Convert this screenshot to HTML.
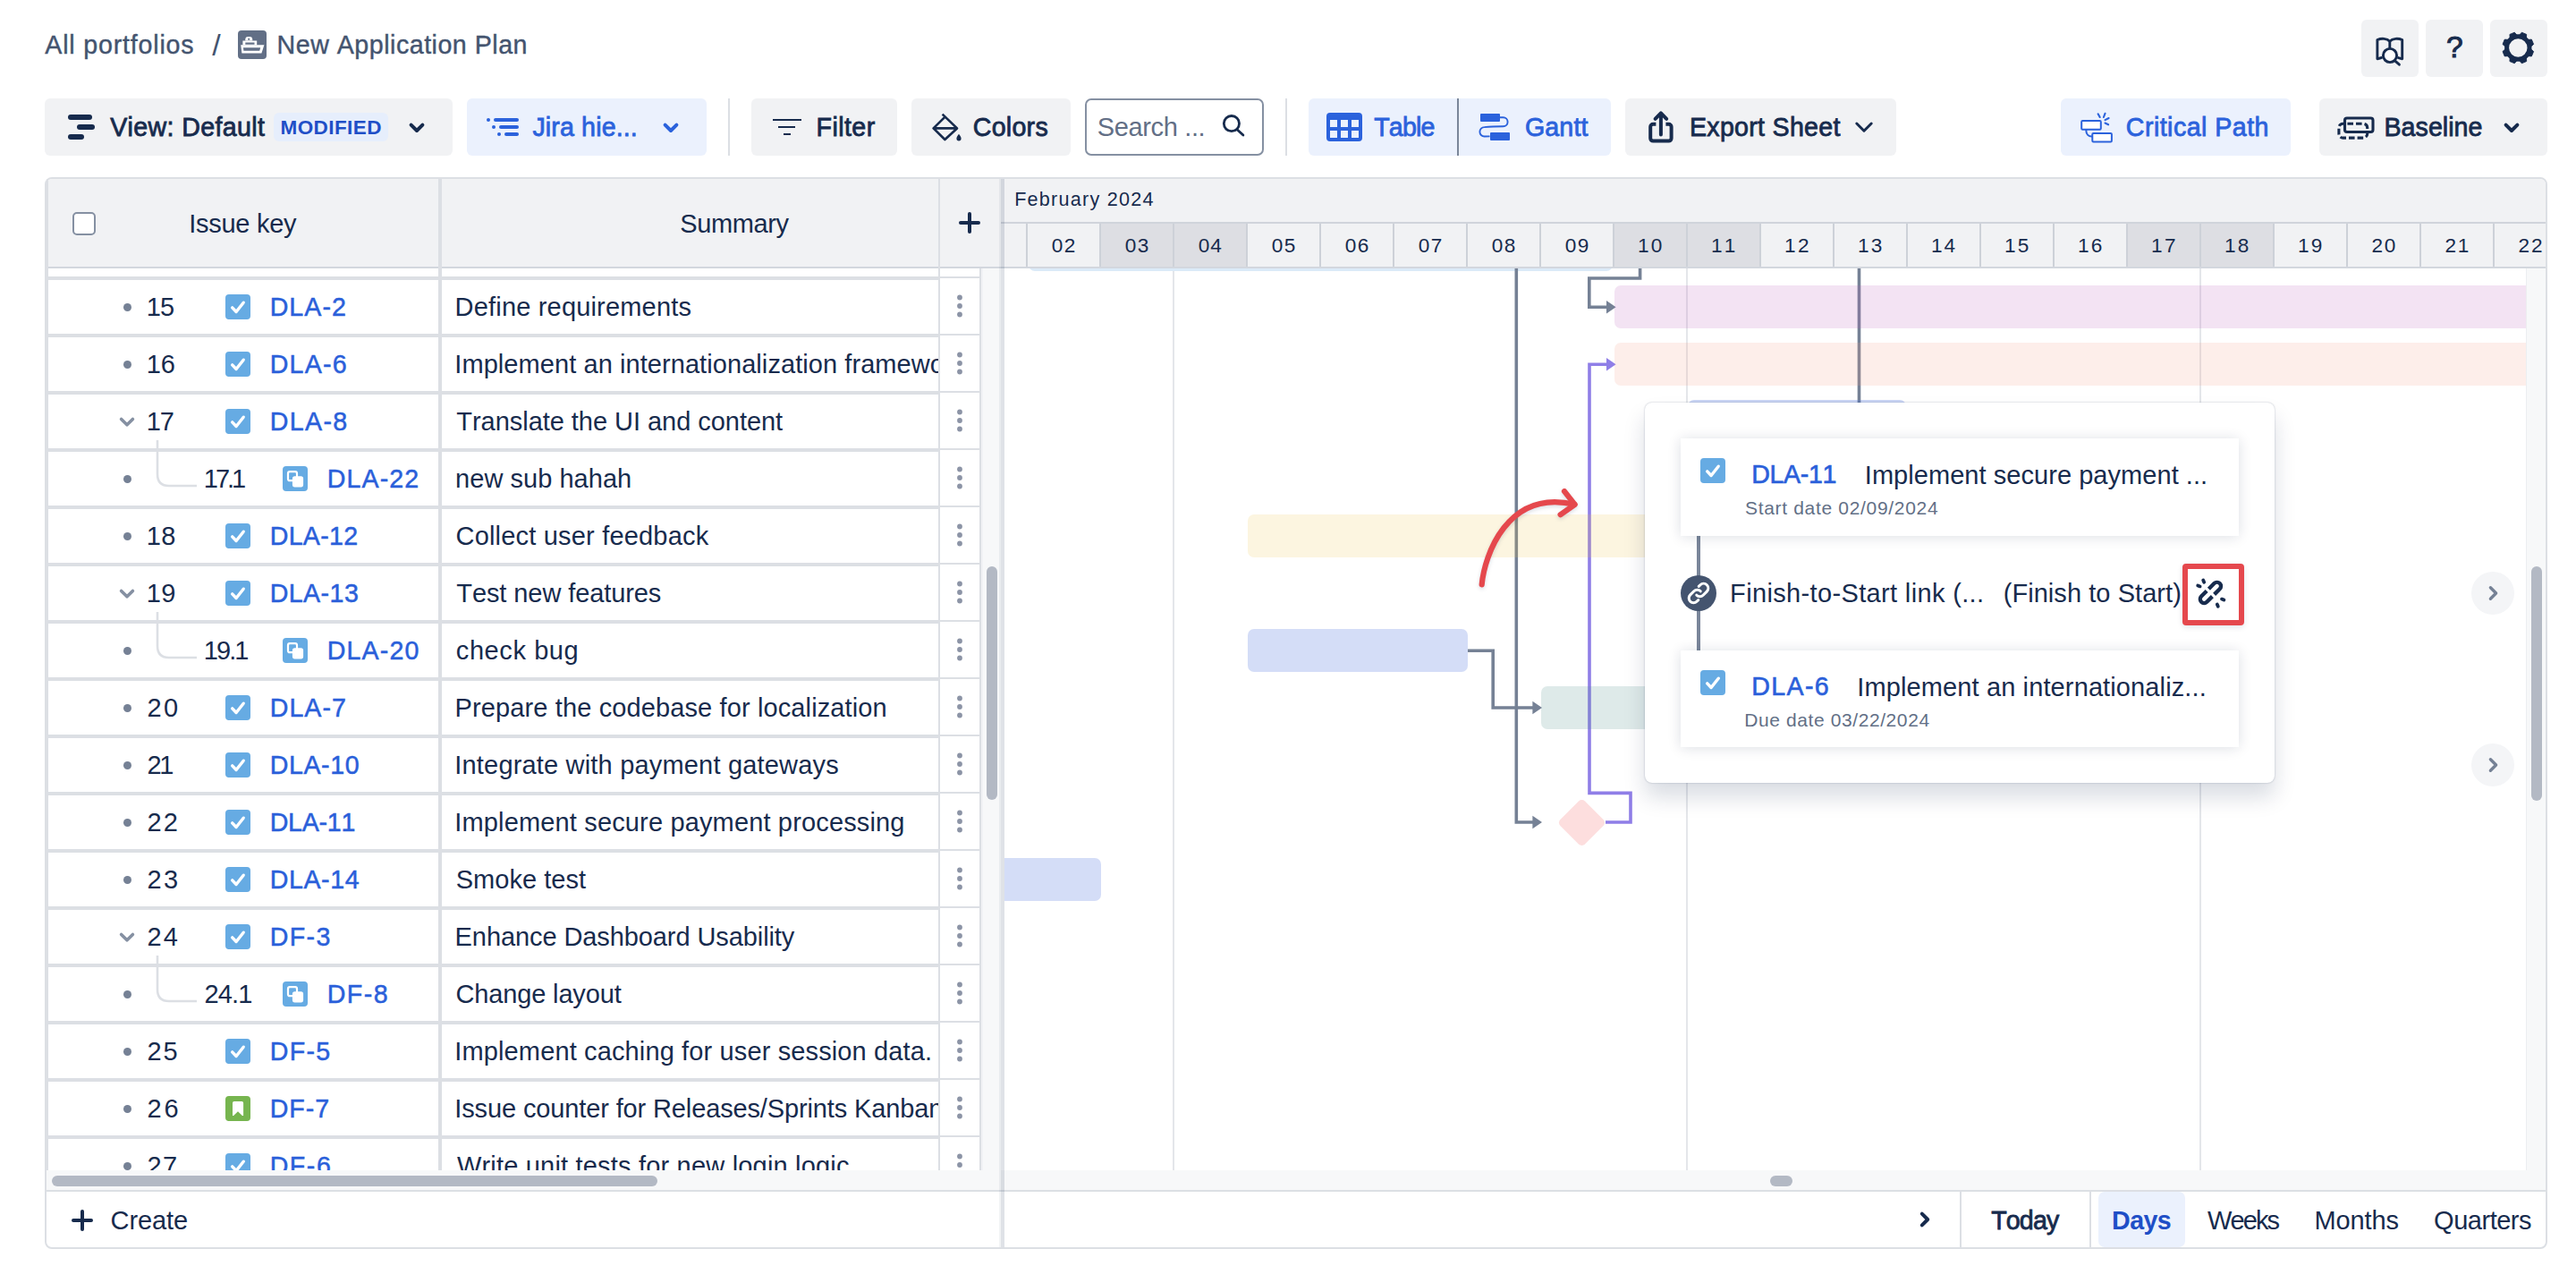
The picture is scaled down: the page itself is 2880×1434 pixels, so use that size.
<!DOCTYPE html>
<html lang="en">
<head>
<meta charset="utf-8">
<title>New Application Plan</title>
<style>
html,body{margin:0;padding:0;}
body{width:2880px;height:1434px;overflow:hidden;background:#fff;position:relative;font-family:"Liberation Sans",sans-serif;color:#172b4d;}
.a{position:absolute;box-sizing:border-box;}
.t{position:absolute;white-space:nowrap;margin:0;font-weight:400;font-kerning:none;}
svg{position:absolute;overflow:visible;}
.clip{overflow:hidden;}
@media (max-width:1500px){body{zoom:0.5;}}
</style>
</head>
<body>

<nav>
<div class="t" style="left:50.3px;top:30.0px;font-size:28.6px;line-height:40px;color:#44546f;letter-spacing:0.81px;-webkit-text-stroke:0.4px #44546f;">All portfolios</div>
<div class="t" style="left:237.2px;top:27.1px;font-size:34px;line-height:47px;color:#44546f;">/</div>
<div class="a" style="left:266px;top:34px;width:32px;height:32px;background:#626f86;border-radius:4px;"></div>
<svg style="left:266px;top:34px" width="32" height="32" viewBox="0 0 32 32" ><path d="M3.2 16.2h26.2l-3 9.4H4.4z" fill="#fff"/><path d="M6 19.3h19.2l-1 3.4H6.4z" fill="#626f86"/>
<path d="M5.4 16.5v-5h15.8v5z" fill="#fff"/><rect x="8.3" y="13.5" width="10.2" height="2.2" fill="#626f86"/>
<path d="M8.3 11.6v-1.4a3.1 3.1 0 0 1 3.1-3.1h1.7a3.1 3.1 0 0 1 3.1 3.1v1.4z" fill="#fff"/><circle cx="12.2" cy="9.8" r="1.1" fill="#626f86"/></svg>
<div class="t" style="left:309.6px;top:30.0px;font-size:28.6px;line-height:40px;color:#44546f;letter-spacing:0.51px;-webkit-text-stroke:0.4px #44546f;">New Application Plan</div>
</nav>
<div class="a" style="left:2640px;top:22px;width:64px;height:64px;background:#f1f2f4;border-radius:6px;"></div>
<div class="a" style="left:2712px;top:22px;width:64px;height:64px;background:#f1f2f4;border-radius:6px;"></div>
<div class="a" style="left:2784px;top:22px;width:64px;height:64px;background:#f1f2f4;border-radius:6px;"></div>
<svg style="left:2640px;top:22px" width="64" height="64" viewBox="0 0 64 64" ><path d="M31.8 24.2c-3-3.4-9.5-3.6-13.9-1.6v21.2l4.6-1.3M31.8 24.2v8M31.8 24.2c3-3.4 9.5-3.6 13.9-1.6v21.2l-4.2-1.2" fill="none" stroke="#172b4d" stroke-width="2.9" stroke-linejoin="round" stroke-linecap="round"/>
<circle cx="32" cy="40" r="7.6" fill="#fff" stroke="#172b4d" stroke-width="2.9"/><path d="M37.8 46.2l4.6 4" stroke="#172b4d" stroke-width="2.9" stroke-linecap="round"/></svg>
<div class="t" style="left:2735.1px;top:29.8px;font-size:33.5px;line-height:46px;color:#172b4d;-webkit-text-stroke:1.0px #172b4d;">?</div>
<svg style="left:2784px;top:22px" width="64" height="64" viewBox="0 0 64 64" ><g transform="translate(31.3 31.5)"><circle r="12.7" fill="none" stroke="#172b4d" stroke-width="5"/><path transform="rotate(22.5)" d="M-4.3 -13.5L-2.9 -17.5H2.9L4.3 -13.5z" fill="#172b4d" stroke="#172b4d" stroke-width="0.8" stroke-linejoin="round"/><path transform="rotate(67.5)" d="M-4.3 -13.5L-2.9 -17.5H2.9L4.3 -13.5z" fill="#172b4d" stroke="#172b4d" stroke-width="0.8" stroke-linejoin="round"/><path transform="rotate(112.5)" d="M-4.3 -13.5L-2.9 -17.5H2.9L4.3 -13.5z" fill="#172b4d" stroke="#172b4d" stroke-width="0.8" stroke-linejoin="round"/><path transform="rotate(157.5)" d="M-4.3 -13.5L-2.9 -17.5H2.9L4.3 -13.5z" fill="#172b4d" stroke="#172b4d" stroke-width="0.8" stroke-linejoin="round"/><path transform="rotate(202.5)" d="M-4.3 -13.5L-2.9 -17.5H2.9L4.3 -13.5z" fill="#172b4d" stroke="#172b4d" stroke-width="0.8" stroke-linejoin="round"/><path transform="rotate(247.5)" d="M-4.3 -13.5L-2.9 -17.5H2.9L4.3 -13.5z" fill="#172b4d" stroke="#172b4d" stroke-width="0.8" stroke-linejoin="round"/><path transform="rotate(292.5)" d="M-4.3 -13.5L-2.9 -17.5H2.9L4.3 -13.5z" fill="#172b4d" stroke="#172b4d" stroke-width="0.8" stroke-linejoin="round"/><path transform="rotate(337.5)" d="M-4.3 -13.5L-2.9 -17.5H2.9L4.3 -13.5z" fill="#172b4d" stroke="#172b4d" stroke-width="0.8" stroke-linejoin="round"/></g></svg>
<section>
<div class="a" style="left:50px;top:110px;width:456px;height:64px;background:#f1f2f4;border-radius:6px;"></div>
<div class="a" style="left:76px;top:128px;width:26.5px;height:5.6px;background:#172b4d;border-radius:3px;"></div>
<div class="a" style="left:86px;top:139px;width:20px;height:5.6px;background:#172b4d;border-radius:3px;"></div>
<div class="a" style="left:76px;top:150px;width:18px;height:5.6px;background:#172b4d;border-radius:3px;"></div>
<div class="t" style="left:123.2px;top:122.0px;font-size:28.6px;line-height:40px;color:#172b4d;letter-spacing:0.35px;-webkit-text-stroke:0.8px #172b4d;">View: Default</div>
<div class="a" style="left:306px;top:126px;width:128px;height:32px;background:#e6eefc;border-radius:6px;"></div>
<div class="t" style="left:313.5px;top:126.5px;font-size:22.5px;line-height:31px;color:#1f4fc7;font-weight:700;letter-spacing:0.42px;">MODIFIED</div>
<svg style="left:456px;top:135px" width="20" height="16" viewBox="0 0 20 16" fill="none" stroke="#172b4d" stroke-width="4" stroke-linecap="round" stroke-linejoin="round"><path d="M3.6 4.6l6.4 6.4 6.4-6.4"/></svg>
<div class="a" style="left:522px;top:110px;width:268px;height:64px;background:#ebf1fd;border-radius:6px;"></div>
<div class="a" style="left:544px;top:132px;width:4px;height:4px;background:#2b62dc;border-radius:2px;"></div>
<div class="a" style="left:552px;top:132px;width:28px;height:4px;background:#2b62dc;border-radius:2px;"></div>
<div class="a" style="left:550px;top:140px;width:4px;height:4px;background:#2b62dc;border-radius:2px;"></div>
<div class="a" style="left:558px;top:140px;width:22px;height:4px;background:#2b62dc;border-radius:2px;"></div>
<div class="a" style="left:556px;top:148px;width:4px;height:4px;background:#2b62dc;border-radius:2px;"></div>
<div class="a" style="left:564px;top:148px;width:16px;height:4px;background:#2b62dc;border-radius:2px;"></div>
<div class="t" style="left:595.4px;top:122.0px;font-size:28.6px;line-height:40px;color:#2b62dc;letter-spacing:0.14px;-webkit-text-stroke:0.8px #2b62dc;">Jira hie...</div>
<svg style="left:740px;top:135px" width="20" height="16" viewBox="0 0 20 16" fill="none" stroke="#2b62dc" stroke-width="4" stroke-linecap="round" stroke-linejoin="round"><path d="M3.6 4.6l6.4 6.4 6.4-6.4"/></svg>
<div class="a" style="left:814px;top:110px;width:2px;height:64px;background:#dcdfe4;"></div>
<div class="a" style="left:840px;top:110px;width:163px;height:64px;background:#f1f2f4;border-radius:6px;"></div>
<div class="a" style="left:864px;top:132.7px;width:31.6px;height:2.5px;background:#172b4d;"></div>
<div class="a" style="left:870.4px;top:140.8px;width:19px;height:2.5px;background:#172b4d;"></div>
<div class="a" style="left:876.2px;top:148.9px;width:7.4px;height:2.5px;background:#172b4d;"></div>
<div class="t" style="left:912.5px;top:122.0px;font-size:28.6px;line-height:40px;color:#172b4d;letter-spacing:0.43px;-webkit-text-stroke:0.8px #172b4d;">Filter</div>
<div class="a" style="left:1019px;top:110px;width:178px;height:64px;background:#f1f2f4;border-radius:6px;"></div>
<svg style="left:1040px;top:124px" width="36" height="36" viewBox="0 0 36 36" ><path d="M13.6 3.6L30 19.4 16.4 32 3.6 19.4 15.8 7.4M3.6 19.4H30" fill="none" stroke="#172b4d" stroke-width="2.7" stroke-linejoin="round" stroke-linecap="butt"/>
<path d="M32 25.8c1.6 2.2 2.6 3.6 2.6 5a2.6 2.6 0 0 1-5.2 0c0-1.4 1-2.8 2.6-5z" fill="#172b4d"/></svg>
<div class="t" style="left:1087.8px;top:122.0px;font-size:28.6px;line-height:40px;color:#172b4d;letter-spacing:0.25px;-webkit-text-stroke:0.8px #172b4d;">Colors</div>
<div class="a" style="left:1213px;top:110px;width:200px;height:64px;background:#fff;border-radius:7px;border:2.4px solid #8590a2;"></div>
<div class="t" style="left:1226.7px;top:122.0px;font-size:29px;line-height:40px;color:#626f86;letter-spacing:-0.35px;">Search ...</div>
<svg style="left:1364px;top:126px" width="28" height="28" viewBox="0 0 28 28" ><circle cx="12.9" cy="12.1" r="8.6" fill="none" stroke="#172b4d" stroke-width="2.8"/><path d="M19.3 18.9l6.6 6.2" stroke="#172b4d" stroke-width="2.8" stroke-linecap="round"/></svg>
<div class="a" style="left:1437px;top:110px;width:2px;height:64px;background:#dcdfe4;"></div>
<div class="a" style="left:1463px;top:110px;width:338px;height:64px;background:#ebf1fd;border-radius:6px;"></div>
<div class="a" style="left:1483px;top:126px;width:40px;height:32px;background:#2b62dc;border-radius:4px;"></div>
<div class="a" style="left:1487.2px;top:134.2px;width:7.9px;height:7.6px;background:#ebf1fd;"></div>
<div class="a" style="left:1487.2px;top:146.2px;width:7.9px;height:7.6px;background:#ebf1fd;"></div>
<div class="a" style="left:1499.1px;top:134.2px;width:7.9px;height:7.6px;background:#ebf1fd;"></div>
<div class="a" style="left:1499.1px;top:146.2px;width:7.9px;height:7.6px;background:#ebf1fd;"></div>
<div class="a" style="left:1511px;top:134.2px;width:7.9px;height:7.6px;background:#ebf1fd;"></div>
<div class="a" style="left:1511px;top:146.2px;width:7.9px;height:7.6px;background:#ebf1fd;"></div>
<div class="t" style="left:1536.2px;top:122.0px;font-size:28.6px;line-height:40px;color:#2b62dc;letter-spacing:-0.81px;-webkit-text-stroke:0.8px #2b62dc;">Table</div>
<div class="a" style="left:1629px;top:110px;width:2px;height:64px;background:#7a8699;"></div>
<div class="a" style="left:1655px;top:126.8px;width:22px;height:9px;background:#2b62dc;border-radius:1px;"></div>
<div class="a" style="left:1665.7px;top:148.3px;width:22px;height:9px;background:#2b62dc;border-radius:1px;"></div>
<svg style="left:1650px;top:124px" width="40" height="36" viewBox="0 0 40 36" ><path d="M27 7.3h3.6a5 5 0 0 1 0 10c-6 0-14.4 .2-21 .8a5.2 5.2 0 0 0 0 10.4c2 0 4 0 6-.1" fill="none" stroke="#2b62dc" stroke-width="1.9"/></svg>
<div class="t" style="left:1704.9px;top:122.0px;font-size:28.6px;line-height:40px;color:#2b62dc;letter-spacing:0.15px;-webkit-text-stroke:0.8px #2b62dc;">Gantt</div>
<div class="a" style="left:1817px;top:110px;width:303px;height:64px;background:#f1f2f4;border-radius:6px;"></div>
<svg style="left:1840px;top:122px" width="34" height="40" viewBox="0 0 34 40" ><path d="M11.4 16.7H8.2a3 3 0 0 0-3 3v12.9a3 3 0 0 0 3 3h17.4a3 3 0 0 0 3-3V19.7a3 3 0 0 0-3-3h-3.2" fill="none" stroke="#172b4d" stroke-width="4" stroke-linejoin="round"/>
<path d="M16.9 28.6V6M10.6 10.8l6.3-6.4 6.3 6.4" fill="none" stroke="#172b4d" stroke-width="4" stroke-linecap="round" stroke-linejoin="round"/></svg>
<div class="t" style="left:1889.0px;top:122.0px;font-size:28.6px;line-height:40px;color:#172b4d;letter-spacing:0.28px;-webkit-text-stroke:0.8px #172b4d;">Export Sheet</div>
<svg style="left:2072px;top:134px" width="24" height="16" viewBox="0 0 24 16" fill="none" stroke="#172b4d" stroke-width="3" stroke-linecap="round" stroke-linejoin="round"><path d="M3.8 4l8.2 8.2L20.2 4"/></svg>
<div class="a" style="left:2304px;top:110px;width:257px;height:64px;background:#ebf1fd;border-radius:6px;"></div>
<svg style="left:2324px;top:124px" width="40" height="38" viewBox="0 0 40 38" ><path d="M8.4 20.6v2a6 6 0 0 0 6 6h1" fill="none" stroke="#2b62dc" stroke-width="2"/>
<rect x="3.2" y="11.1" width="21.6" height="9.6" rx="1.2" fill="#fff" stroke="#2b62dc" stroke-width="2"/>
<rect x="15.3" y="24.9" width="21.6" height="9.6" rx="1.2" fill="#fff" stroke="#2b62dc" stroke-width="2"/>
<path d="M21.6 3.3l2.1 3.7M29.5 2.8l-1.6 4.2M33.6 8l-4.1 2.1M29.5 13.5l3.6 1.8" stroke="#2b62dc" stroke-width="2.1" stroke-linecap="round"/></svg>
<div class="t" style="left:2376.8px;top:122.0px;font-size:28.6px;line-height:40px;color:#2b62dc;letter-spacing:0.46px;-webkit-text-stroke:0.8px #2b62dc;">Critical Path</div>
<div class="a" style="left:2593px;top:110px;width:255px;height:64px;background:#f1f2f4;border-radius:6px;"></div>
<svg style="left:2610px;top:126px" width="48" height="34" viewBox="0 0 48 34" ><rect x="4.9" y="12.3" width="31.8" height="15.8" rx="4.5" fill="none" stroke="#172b4d" stroke-width="3.1" stroke-dasharray="6.6 3" stroke-dashoffset="-5"/>
<rect x="11.5" y="6" width="31.5" height="15.5" rx="2.5" fill="none" stroke="#172b4d" stroke-width="3.1"/></svg>
<div class="t" style="left:2665.5px;top:122.0px;font-size:28.6px;line-height:40px;color:#172b4d;letter-spacing:0.04px;-webkit-text-stroke:0.8px #172b4d;">Baseline</div>
<svg style="left:2798px;top:135px" width="20" height="16" viewBox="0 0 20 16" fill="none" stroke="#172b4d" stroke-width="4" stroke-linecap="round" stroke-linejoin="round"><path d="M3.6 4.6l6.4 6.4 6.4-6.4"/></svg>
</section>
<main>
<div class="a" style="left:50px;top:198px;width:2798px;height:1198px;background:#fff;border-radius:8px;border:2px solid #dcdfe4;"></div>
<div class="a" style="left:52px;top:200px;width:2794px;height:98px;background:#f1f2f4;border-radius:6px 6px 0 0;"></div>
<div class="a" style="left:52px;top:298px;width:2794px;height:2px;background:#d3d7de;"></div>
<div class="a" style="left:52px;top:200px;width:2px;height:1108px;background:#dcdfe4;"></div>
<div class="a" style="left:81px;top:237px;width:26px;height:26px;background:#fff;border-radius:5px;border:2px solid #8590a2;"></div>
<h2 class="t" style="left:211.3px;top:230.0px;font-size:29px;line-height:40px;color:#172b4d;letter-spacing:-0.28px;">Issue key</h2>
<h2 class="t" style="left:760.2px;top:230.0px;font-size:29px;line-height:40px;color:#172b4d;letter-spacing:-0.37px;">Summary</h2>
<div class="a" style="left:490px;top:200px;width:4px;height:1108px;background:#dcdfe4;"></div>
<div class="a" style="left:1049px;top:200px;width:2px;height:1108px;background:#dcdfe4;"></div>
<div class="a" style="left:1072px;top:247.2px;width:24px;height:3.6px;background:#172b4d;border-radius:2px;"></div>
<div class="a" style="left:1082.2px;top:237px;width:3.6px;height:24px;background:#172b4d;border-radius:2px;"></div>
<div class="a clip" style="left:52px;top:300px;width:1068px;height:1008px;">
<div class="a" style="left:0px;top:9px;width:997px;height:4px;background:#dcdfe4;"></div>
<div class="a" style="left:997px;top:9px;width:46px;height:2px;background:#dcdfe4;"></div>
<div class="a" style="left:0px;top:73px;width:997px;height:4px;background:#dcdfe4;"></div>
<div class="a" style="left:997px;top:73px;width:46px;height:2px;background:#dcdfe4;"></div>
<div class="a" style="left:0px;top:137px;width:997px;height:4px;background:#dcdfe4;"></div>
<div class="a" style="left:997px;top:137px;width:46px;height:2px;background:#dcdfe4;"></div>
<div class="a" style="left:0px;top:201px;width:997px;height:4px;background:#dcdfe4;"></div>
<div class="a" style="left:997px;top:201px;width:46px;height:2px;background:#dcdfe4;"></div>
<div class="a" style="left:0px;top:265px;width:997px;height:4px;background:#dcdfe4;"></div>
<div class="a" style="left:997px;top:265px;width:46px;height:2px;background:#dcdfe4;"></div>
<div class="a" style="left:0px;top:329px;width:997px;height:4px;background:#dcdfe4;"></div>
<div class="a" style="left:997px;top:329px;width:46px;height:2px;background:#dcdfe4;"></div>
<div class="a" style="left:0px;top:393px;width:997px;height:4px;background:#dcdfe4;"></div>
<div class="a" style="left:997px;top:393px;width:46px;height:2px;background:#dcdfe4;"></div>
<div class="a" style="left:0px;top:457px;width:997px;height:4px;background:#dcdfe4;"></div>
<div class="a" style="left:997px;top:457px;width:46px;height:2px;background:#dcdfe4;"></div>
<div class="a" style="left:0px;top:521px;width:997px;height:4px;background:#dcdfe4;"></div>
<div class="a" style="left:997px;top:521px;width:46px;height:2px;background:#dcdfe4;"></div>
<div class="a" style="left:0px;top:585px;width:997px;height:4px;background:#dcdfe4;"></div>
<div class="a" style="left:997px;top:585px;width:46px;height:2px;background:#dcdfe4;"></div>
<div class="a" style="left:0px;top:649px;width:997px;height:4px;background:#dcdfe4;"></div>
<div class="a" style="left:997px;top:649px;width:46px;height:2px;background:#dcdfe4;"></div>
<div class="a" style="left:0px;top:713px;width:997px;height:4px;background:#dcdfe4;"></div>
<div class="a" style="left:997px;top:713px;width:46px;height:2px;background:#dcdfe4;"></div>
<div class="a" style="left:0px;top:777px;width:997px;height:4px;background:#dcdfe4;"></div>
<div class="a" style="left:997px;top:777px;width:46px;height:2px;background:#dcdfe4;"></div>
<div class="a" style="left:0px;top:841px;width:997px;height:4px;background:#dcdfe4;"></div>
<div class="a" style="left:997px;top:841px;width:46px;height:2px;background:#dcdfe4;"></div>
<div class="a" style="left:0px;top:905px;width:997px;height:4px;background:#dcdfe4;"></div>
<div class="a" style="left:997px;top:905px;width:46px;height:2px;background:#dcdfe4;"></div>
<div class="a" style="left:0px;top:969px;width:997px;height:4px;background:#dcdfe4;"></div>
<div class="a" style="left:997px;top:969px;width:46px;height:2px;background:#dcdfe4;"></div>
<div class="a" style="left:0px;top:1033px;width:997px;height:4px;background:#dcdfe4;"></div>
<div class="a" style="left:997px;top:1033px;width:46px;height:2px;background:#dcdfe4;"></div>
<div class="a" style="left:85.5px;top:38.5px;width:9px;height:9px;background:#758195;border-radius:5px;"></div>
<div class="t" style="left:111.8px;top:23.0px;font-size:29px;line-height:40px;color:#172b4d;letter-spacing:-0.83px;">15</div>
<div class="a" style="left:200px;top:29px;width:28px;height:28px;background:#66abe3;border-radius:4px;"></div><svg style="left:200px;top:29px" width="28" height="28" viewBox="0 0 28 28" fill="none" stroke="#fff" stroke-width="3.4" stroke-linecap="round" stroke-linejoin="round"><path d="M7.7 14.9l4.4 4.6 8.1-10.3"/></svg>
<div class="t" style="left:249.7px;top:23.0px;font-size:28.6px;line-height:40px;color:#2a5fda;letter-spacing:1.03px;-webkit-text-stroke:0.5px #2a5fda;">DLA-2</div>
<div class="a clip" style="left:442px;top:19px;width:555px;height:48px;"><div class="t" style="left:14.6px;top:4.0px;font-size:29px;line-height:40px;color:#172b4d;letter-spacing:0.18px;">Define requirements</div></div>
<svg style="left:1017px;top:28px" width="8" height="28" viewBox="0 0 8 28" fill="#8c94a6"><circle cx="4" cy="4.5" r="2.9"/><circle cx="4" cy="14" r="2.9"/><circle cx="4" cy="23.5" r="2.9"/></svg>
<div class="a" style="left:85.5px;top:102.5px;width:9px;height:9px;background:#758195;border-radius:5px;"></div>
<div class="t" style="left:111.8px;top:87.0px;font-size:29px;line-height:40px;color:#172b4d;letter-spacing:-0.27px;">16</div>
<div class="a" style="left:200px;top:93px;width:28px;height:28px;background:#66abe3;border-radius:4px;"></div><svg style="left:200px;top:93px" width="28" height="28" viewBox="0 0 28 28" fill="none" stroke="#fff" stroke-width="3.4" stroke-linecap="round" stroke-linejoin="round"><path d="M7.7 14.9l4.4 4.6 8.1-10.3"/></svg>
<div class="t" style="left:249.7px;top:87.0px;font-size:28.6px;line-height:40px;color:#2a5fda;letter-spacing:1.26px;-webkit-text-stroke:0.5px #2a5fda;">DLA-6</div>
<div class="a clip" style="left:442px;top:83px;width:555px;height:48px;"><div class="t" style="left:14.3px;top:4.0px;font-size:29px;line-height:40px;color:#172b4d;letter-spacing:0.07px;">Implement an internationalization framework</div></div>
<svg style="left:1017px;top:92px" width="8" height="28" viewBox="0 0 8 28" fill="#8c94a6"><circle cx="4" cy="4.5" r="2.9"/><circle cx="4" cy="14" r="2.9"/><circle cx="4" cy="23.5" r="2.9"/></svg>
<svg style="left:80px;top:164px" width="20" height="16" viewBox="0 0 20 16" fill="none" stroke="#8590a2" stroke-width="3.6" stroke-linecap="round" stroke-linejoin="round"><path d="M3.6 4.4l6.4 6.4 6.4-6.4"/></svg>
<div class="t" style="left:111.8px;top:151.0px;font-size:29px;line-height:40px;color:#172b4d;letter-spacing:-1.09px;">17</div>
<div class="a" style="left:200px;top:157px;width:28px;height:28px;background:#66abe3;border-radius:4px;"></div><svg style="left:200px;top:157px" width="28" height="28" viewBox="0 0 28 28" fill="none" stroke="#fff" stroke-width="3.4" stroke-linecap="round" stroke-linejoin="round"><path d="M7.7 14.9l4.4 4.6 8.1-10.3"/></svg>
<div class="t" style="left:249.7px;top:151.0px;font-size:28.6px;line-height:40px;color:#2a5fda;letter-spacing:1.38px;-webkit-text-stroke:0.5px #2a5fda;">DLA-8</div>
<div class="a clip" style="left:442px;top:147px;width:555px;height:48px;"><div class="t" style="left:16.3px;top:4.0px;font-size:29px;line-height:40px;color:#172b4d;letter-spacing:-0.04px;">Translate the UI and content</div></div>
<svg style="left:1017px;top:156px" width="8" height="28" viewBox="0 0 8 28" fill="#8c94a6"><circle cx="4" cy="4.5" r="2.9"/><circle cx="4" cy="14" r="2.9"/><circle cx="4" cy="23.5" r="2.9"/></svg>
<div class="a" style="left:85.5px;top:230.5px;width:9px;height:9px;background:#758195;border-radius:5px;"></div>
<svg style="left:122px;top:192px" width="48" height="56" viewBox="0 0 48 56" fill="none" stroke="#dcdfe4" stroke-width="2.6"><path d="M2 0v38q0 13 13 13h31"/></svg>
<div class="t" style="left:175.8px;top:215.0px;font-size:29px;line-height:40px;color:#172b4d;letter-spacing:-3.04px;">17.1</div>
<div class="a" style="left:264px;top:221px;width:28px;height:28px;background:#66abe3;border-radius:4px;"></div><svg style="left:264px;top:221px" width="28" height="28" viewBox="0 0 28 28" ><rect x="6" y="6.2" width="10" height="10" rx="2" fill="none" stroke="#fff" stroke-width="2.2"/><rect x="10.9" y="11.2" width="12.2" height="12.2" rx="2.6" fill="#fff"/></svg>
<div class="t" style="left:313.7px;top:215.0px;font-size:28.6px;line-height:40px;color:#2a5fda;letter-spacing:1.12px;-webkit-text-stroke:0.5px #2a5fda;">DLA-22</div>
<div class="a clip" style="left:442px;top:211px;width:555px;height:48px;"><div class="t" style="left:15.1px;top:4.0px;font-size:29px;line-height:40px;color:#172b4d;letter-spacing:0.03px;">new sub hahah</div></div>
<svg style="left:1017px;top:220px" width="8" height="28" viewBox="0 0 8 28" fill="#8c94a6"><circle cx="4" cy="4.5" r="2.9"/><circle cx="4" cy="14" r="2.9"/><circle cx="4" cy="23.5" r="2.9"/></svg>
<div class="a" style="left:85.5px;top:294.5px;width:9px;height:9px;background:#758195;border-radius:5px;"></div>
<div class="t" style="left:111.8px;top:279.0px;font-size:29px;line-height:40px;color:#172b4d;letter-spacing:0.21px;">18</div>
<div class="a" style="left:200px;top:285px;width:28px;height:28px;background:#66abe3;border-radius:4px;"></div><svg style="left:200px;top:285px" width="28" height="28" viewBox="0 0 28 28" fill="none" stroke="#fff" stroke-width="3.4" stroke-linecap="round" stroke-linejoin="round"><path d="M7.7 14.9l4.4 4.6 8.1-10.3"/></svg>
<div class="t" style="left:249.7px;top:279.0px;font-size:28.6px;line-height:40px;color:#2a5fda;letter-spacing:0.30px;-webkit-text-stroke:0.5px #2a5fda;">DLA-12</div>
<div class="a clip" style="left:442px;top:275px;width:555px;height:48px;"><div class="t" style="left:15.5px;top:4.0px;font-size:29px;line-height:40px;color:#172b4d;letter-spacing:0.19px;">Collect user feedback</div></div>
<svg style="left:1017px;top:284px" width="8" height="28" viewBox="0 0 8 28" fill="#8c94a6"><circle cx="4" cy="4.5" r="2.9"/><circle cx="4" cy="14" r="2.9"/><circle cx="4" cy="23.5" r="2.9"/></svg>
<svg style="left:80px;top:356px" width="20" height="16" viewBox="0 0 20 16" fill="none" stroke="#8590a2" stroke-width="3.6" stroke-linecap="round" stroke-linejoin="round"><path d="M3.6 4.4l6.4 6.4 6.4-6.4"/></svg>
<div class="t" style="left:111.8px;top:343.0px;font-size:29px;line-height:40px;color:#172b4d;letter-spacing:0.33px;">19</div>
<div class="a" style="left:200px;top:349px;width:28px;height:28px;background:#66abe3;border-radius:4px;"></div><svg style="left:200px;top:349px" width="28" height="28" viewBox="0 0 28 28" fill="none" stroke="#fff" stroke-width="3.4" stroke-linecap="round" stroke-linejoin="round"><path d="M7.7 14.9l4.4 4.6 8.1-10.3"/></svg>
<div class="t" style="left:249.7px;top:343.0px;font-size:28.6px;line-height:40px;color:#2a5fda;letter-spacing:0.43px;-webkit-text-stroke:0.5px #2a5fda;">DLA-13</div>
<div class="a clip" style="left:442px;top:339px;width:555px;height:48px;"><div class="t" style="left:16.3px;top:4.0px;font-size:29px;line-height:40px;color:#172b4d;letter-spacing:-0.09px;">Test new features</div></div>
<svg style="left:1017px;top:348px" width="8" height="28" viewBox="0 0 8 28" fill="#8c94a6"><circle cx="4" cy="4.5" r="2.9"/><circle cx="4" cy="14" r="2.9"/><circle cx="4" cy="23.5" r="2.9"/></svg>
<div class="a" style="left:85.5px;top:422.5px;width:9px;height:9px;background:#758195;border-radius:5px;"></div>
<svg style="left:122px;top:384px" width="48" height="56" viewBox="0 0 48 56" fill="none" stroke="#dcdfe4" stroke-width="2.6"><path d="M2 0v38q0 13 13 13h31"/></svg>
<div class="t" style="left:175.8px;top:407.0px;font-size:29px;line-height:40px;color:#172b4d;letter-spacing:-1.94px;">19.1</div>
<div class="a" style="left:264px;top:413px;width:28px;height:28px;background:#66abe3;border-radius:4px;"></div><svg style="left:264px;top:413px" width="28" height="28" viewBox="0 0 28 28" ><rect x="6" y="6.2" width="10" height="10" rx="2" fill="none" stroke="#fff" stroke-width="2.2"/><rect x="10.9" y="11.2" width="12.2" height="12.2" rx="2.6" fill="#fff"/></svg>
<div class="t" style="left:313.7px;top:407.0px;font-size:28.6px;line-height:40px;color:#2a5fda;letter-spacing:1.16px;-webkit-text-stroke:0.5px #2a5fda;">DLA-20</div>
<div class="a clip" style="left:442px;top:403px;width:555px;height:48px;"><div class="t" style="left:15.8px;top:4.0px;font-size:29px;line-height:40px;color:#172b4d;letter-spacing:0.59px;">check bug</div></div>
<svg style="left:1017px;top:412px" width="8" height="28" viewBox="0 0 8 28" fill="#8c94a6"><circle cx="4" cy="4.5" r="2.9"/><circle cx="4" cy="14" r="2.9"/><circle cx="4" cy="23.5" r="2.9"/></svg>
<div class="a" style="left:85.5px;top:486.5px;width:9px;height:9px;background:#758195;border-radius:5px;"></div>
<div class="t" style="left:112.5px;top:471.0px;font-size:29px;line-height:40px;color:#172b4d;letter-spacing:2.33px;">20</div>
<div class="a" style="left:200px;top:477px;width:28px;height:28px;background:#66abe3;border-radius:4px;"></div><svg style="left:200px;top:477px" width="28" height="28" viewBox="0 0 28 28" fill="none" stroke="#fff" stroke-width="3.4" stroke-linecap="round" stroke-linejoin="round"><path d="M7.7 14.9l4.4 4.6 8.1-10.3"/></svg>
<div class="t" style="left:249.7px;top:471.0px;font-size:28.6px;line-height:40px;color:#2a5fda;letter-spacing:1.05px;-webkit-text-stroke:0.5px #2a5fda;">DLA-7</div>
<div class="a clip" style="left:442px;top:467px;width:555px;height:48px;"><div class="t" style="left:14.6px;top:4.0px;font-size:29px;line-height:40px;color:#172b4d;letter-spacing:0.12px;">Prepare the codebase for localization</div></div>
<svg style="left:1017px;top:476px" width="8" height="28" viewBox="0 0 8 28" fill="#8c94a6"><circle cx="4" cy="4.5" r="2.9"/><circle cx="4" cy="14" r="2.9"/><circle cx="4" cy="23.5" r="2.9"/></svg>
<div class="a" style="left:85.5px;top:550.5px;width:9px;height:9px;background:#758195;border-radius:5px;"></div>
<div class="t" style="left:112.5px;top:535.0px;font-size:29px;line-height:40px;color:#172b4d;letter-spacing:-2.38px;">21</div>
<div class="a" style="left:200px;top:541px;width:28px;height:28px;background:#66abe3;border-radius:4px;"></div><svg style="left:200px;top:541px" width="28" height="28" viewBox="0 0 28 28" fill="none" stroke="#fff" stroke-width="3.4" stroke-linecap="round" stroke-linejoin="round"><path d="M7.7 14.9l4.4 4.6 8.1-10.3"/></svg>
<div class="t" style="left:249.7px;top:535.0px;font-size:28.6px;line-height:40px;color:#2a5fda;letter-spacing:0.58px;-webkit-text-stroke:0.5px #2a5fda;">DLA-10</div>
<div class="a clip" style="left:442px;top:531px;width:555px;height:48px;"><div class="t" style="left:14.3px;top:4.0px;font-size:29px;line-height:40px;color:#172b4d;letter-spacing:0.18px;">Integrate with payment gateways</div></div>
<svg style="left:1017px;top:540px" width="8" height="28" viewBox="0 0 8 28" fill="#8c94a6"><circle cx="4" cy="4.5" r="2.9"/><circle cx="4" cy="14" r="2.9"/><circle cx="4" cy="23.5" r="2.9"/></svg>
<div class="a" style="left:85.5px;top:614.5px;width:9px;height:9px;background:#758195;border-radius:5px;"></div>
<div class="t" style="left:112.5px;top:599.0px;font-size:29px;line-height:40px;color:#172b4d;letter-spacing:2.16px;">22</div>
<div class="a" style="left:200px;top:605px;width:28px;height:28px;background:#66abe3;border-radius:4px;"></div><svg style="left:200px;top:605px" width="28" height="28" viewBox="0 0 28 28" fill="none" stroke="#fff" stroke-width="3.4" stroke-linecap="round" stroke-linejoin="round"><path d="M7.7 14.9l4.4 4.6 8.1-10.3"/></svg>
<div class="t" style="left:249.7px;top:599.0px;font-size:28.6px;line-height:40px;color:#2a5fda;letter-spacing:-0.25px;-webkit-text-stroke:0.5px #2a5fda;">DLA-11</div>
<div class="a clip" style="left:442px;top:595px;width:555px;height:48px;"><div class="t" style="left:14.3px;top:4.0px;font-size:29px;line-height:40px;color:#172b4d;letter-spacing:0.15px;">Implement secure payment processing</div></div>
<svg style="left:1017px;top:604px" width="8" height="28" viewBox="0 0 8 28" fill="#8c94a6"><circle cx="4" cy="4.5" r="2.9"/><circle cx="4" cy="14" r="2.9"/><circle cx="4" cy="23.5" r="2.9"/></svg>
<div class="a" style="left:85.5px;top:678.5px;width:9px;height:9px;background:#758195;border-radius:5px;"></div>
<div class="t" style="left:112.5px;top:663.0px;font-size:29px;line-height:40px;color:#172b4d;letter-spacing:2.48px;">23</div>
<div class="a" style="left:200px;top:669px;width:28px;height:28px;background:#66abe3;border-radius:4px;"></div><svg style="left:200px;top:669px" width="28" height="28" viewBox="0 0 28 28" fill="none" stroke="#fff" stroke-width="3.4" stroke-linecap="round" stroke-linejoin="round"><path d="M7.7 14.9l4.4 4.6 8.1-10.3"/></svg>
<div class="t" style="left:249.7px;top:663.0px;font-size:28.6px;line-height:40px;color:#2a5fda;letter-spacing:0.60px;-webkit-text-stroke:0.5px #2a5fda;">DLA-14</div>
<div class="a clip" style="left:442px;top:659px;width:555px;height:48px;"><div class="t" style="left:15.7px;top:4.0px;font-size:29px;line-height:40px;color:#172b4d;letter-spacing:0.04px;">Smoke test</div></div>
<svg style="left:1017px;top:668px" width="8" height="28" viewBox="0 0 8 28" fill="#8c94a6"><circle cx="4" cy="4.5" r="2.9"/><circle cx="4" cy="14" r="2.9"/><circle cx="4" cy="23.5" r="2.9"/></svg>
<svg style="left:80px;top:740px" width="20" height="16" viewBox="0 0 20 16" fill="none" stroke="#8590a2" stroke-width="3.6" stroke-linecap="round" stroke-linejoin="round"><path d="M3.6 4.4l6.4 6.4 6.4-6.4"/></svg>
<div class="t" style="left:112.5px;top:727.0px;font-size:29px;line-height:40px;color:#172b4d;letter-spacing:2.05px;">24</div>
<div class="a" style="left:200px;top:733px;width:28px;height:28px;background:#66abe3;border-radius:4px;"></div><svg style="left:200px;top:733px" width="28" height="28" viewBox="0 0 28 28" fill="none" stroke="#fff" stroke-width="3.4" stroke-linecap="round" stroke-linejoin="round"><path d="M7.7 14.9l4.4 4.6 8.1-10.3"/></svg>
<div class="t" style="left:249.7px;top:727.0px;font-size:28.6px;line-height:40px;color:#2a5fda;letter-spacing:1.35px;-webkit-text-stroke:0.5px #2a5fda;">DF-3</div>
<div class="a clip" style="left:442px;top:723px;width:555px;height:48px;"><div class="t" style="left:14.6px;top:4.0px;font-size:29px;line-height:40px;color:#172b4d;letter-spacing:-0.09px;">Enhance Dashboard Usability</div></div>
<svg style="left:1017px;top:732px" width="8" height="28" viewBox="0 0 8 28" fill="#8c94a6"><circle cx="4" cy="4.5" r="2.9"/><circle cx="4" cy="14" r="2.9"/><circle cx="4" cy="23.5" r="2.9"/></svg>
<div class="a" style="left:85.5px;top:806.5px;width:9px;height:9px;background:#758195;border-radius:5px;"></div>
<svg style="left:122px;top:768px" width="48" height="56" viewBox="0 0 48 56" fill="none" stroke="#dcdfe4" stroke-width="2.6"><path d="M2 0v38q0 13 13 13h31"/></svg>
<div class="t" style="left:176.5px;top:791.0px;font-size:29px;line-height:40px;color:#172b4d;letter-spacing:-0.86px;">24.1</div>
<div class="a" style="left:264px;top:797px;width:28px;height:28px;background:#66abe3;border-radius:4px;"></div><svg style="left:264px;top:797px" width="28" height="28" viewBox="0 0 28 28" ><rect x="6" y="6.2" width="10" height="10" rx="2" fill="none" stroke="#fff" stroke-width="2.2"/><rect x="10.9" y="11.2" width="12.2" height="12.2" rx="2.6" fill="#fff"/></svg>
<div class="t" style="left:313.7px;top:791.0px;font-size:28.6px;line-height:40px;color:#2a5fda;letter-spacing:1.51px;-webkit-text-stroke:0.5px #2a5fda;">DF-8</div>
<div class="a clip" style="left:442px;top:787px;width:555px;height:48px;"><div class="t" style="left:15.5px;top:4.0px;font-size:29px;line-height:40px;color:#172b4d;letter-spacing:-0.15px;">Change layout</div></div>
<svg style="left:1017px;top:796px" width="8" height="28" viewBox="0 0 8 28" fill="#8c94a6"><circle cx="4" cy="4.5" r="2.9"/><circle cx="4" cy="14" r="2.9"/><circle cx="4" cy="23.5" r="2.9"/></svg>
<div class="a" style="left:85.5px;top:870.5px;width:9px;height:9px;background:#758195;border-radius:5px;"></div>
<div class="t" style="left:112.5px;top:855.0px;font-size:29px;line-height:40px;color:#172b4d;letter-spacing:1.92px;">25</div>
<div class="a" style="left:200px;top:861px;width:28px;height:28px;background:#66abe3;border-radius:4px;"></div><svg style="left:200px;top:861px" width="28" height="28" viewBox="0 0 28 28" fill="none" stroke="#fff" stroke-width="3.4" stroke-linecap="round" stroke-linejoin="round"><path d="M7.7 14.9l4.4 4.6 8.1-10.3"/></svg>
<div class="t" style="left:249.7px;top:855.0px;font-size:28.6px;line-height:40px;color:#2a5fda;letter-spacing:1.33px;-webkit-text-stroke:0.5px #2a5fda;">DF-5</div>
<div class="a clip" style="left:442px;top:851px;width:555px;height:48px;"><div class="t" style="left:14.3px;top:4.0px;font-size:29px;line-height:40px;color:#172b4d;letter-spacing:0.13px;">Implement caching for user session data.</div></div>
<svg style="left:1017px;top:860px" width="8" height="28" viewBox="0 0 8 28" fill="#8c94a6"><circle cx="4" cy="4.5" r="2.9"/><circle cx="4" cy="14" r="2.9"/><circle cx="4" cy="23.5" r="2.9"/></svg>
<div class="a" style="left:85.5px;top:934.5px;width:9px;height:9px;background:#758195;border-radius:5px;"></div>
<div class="t" style="left:112.5px;top:919.0px;font-size:29px;line-height:40px;color:#172b4d;letter-spacing:2.78px;">26</div>
<div class="a" style="left:200px;top:925px;width:28px;height:28px;background:#76b54f;border-radius:4px;"></div><svg style="left:200px;top:925px" width="28" height="28" viewBox="0 0 28 28" ><path d="M8 7.8a1.8 1.8 0 0 1 1.8-1.8h8.5a1.8 1.8 0 0 1 1.8 1.8V22h-1.2l-4.9-4.8L9.1 22H8z" fill="#fff"/></svg>
<div class="t" style="left:249.7px;top:919.0px;font-size:28.6px;line-height:40px;color:#2a5fda;letter-spacing:0.98px;-webkit-text-stroke:0.5px #2a5fda;">DF-7</div>
<div class="a clip" style="left:442px;top:915px;width:555px;height:48px;"><div class="t" style="left:14.3px;top:4.0px;font-size:29px;line-height:40px;color:#172b4d;letter-spacing:-0.13px;">Issue counter for Releases/Sprints Kanban board</div></div>
<svg style="left:1017px;top:924px" width="8" height="28" viewBox="0 0 8 28" fill="#8c94a6"><circle cx="4" cy="4.5" r="2.9"/><circle cx="4" cy="14" r="2.9"/><circle cx="4" cy="23.5" r="2.9"/></svg>
<div class="a" style="left:85.5px;top:998.5px;width:9px;height:9px;background:#758195;border-radius:5px;"></div>
<div class="t" style="left:112.5px;top:983.0px;font-size:29px;line-height:40px;color:#172b4d;letter-spacing:1.26px;">27</div>
<div class="a" style="left:200px;top:989px;width:28px;height:28px;background:#66abe3;border-radius:4px;"></div><svg style="left:200px;top:989px" width="28" height="28" viewBox="0 0 28 28" fill="none" stroke="#fff" stroke-width="3.4" stroke-linecap="round" stroke-linejoin="round"><path d="M7.7 14.9l4.4 4.6 8.1-10.3"/></svg>
<div class="t" style="left:249.7px;top:983.0px;font-size:28.6px;line-height:40px;color:#2a5fda;letter-spacing:1.52px;-webkit-text-stroke:0.5px #2a5fda;">DF-6</div>
<div class="a clip" style="left:442px;top:979px;width:555px;height:48px;"><div class="t" style="left:16.9px;top:4.0px;font-size:29px;line-height:40px;color:#172b4d;letter-spacing:0.19px;">Write unit tests for new login logic</div></div>
<svg style="left:1017px;top:988px" width="8" height="28" viewBox="0 0 8 28" fill="#8c94a6"><circle cx="4" cy="4.5" r="2.9"/><circle cx="4" cy="14" r="2.9"/><circle cx="4" cy="23.5" r="2.9"/></svg>
</div>
<div class="a" style="left:1095px;top:300px;width:2px;height:1008px;background:#dcdfe4;"></div>
<div class="a" style="left:1097px;top:300px;width:22px;height:1008px;background:#f7f8f9;border-left:2px solid #f1f2f5;"></div>
<div class="a" style="left:1103px;top:633px;width:12px;height:261px;background:#b3b9c4;border-radius:6px;"></div>
<div class="a" style="left:52px;top:1308px;width:2794px;height:22px;background:#f7f8f9;"></div>
<div class="a" style="left:58px;top:1314px;width:677px;height:12px;background:#b3b9c4;border-radius:6px;"></div>
<div class="a" style="left:1979px;top:1314px;width:25px;height:12px;background:#b3b9c4;border-radius:6px;"></div>
<div class="a" style="left:52px;top:1330px;width:2794px;height:2px;background:#dcdfe4;"></div>
<div class="t" style="left:1134.2px;top:207.6px;font-size:21.6px;line-height:30px;color:#172b4d;letter-spacing:1.24px;">February 2024</div>
<div class="a" style="left:1119px;top:248px;width:1727px;height:2px;background:#d0d4db;"></div>
<div class="a clip" style="left:1123px;top:250px;width:1723px;height:48px;">
<div class="a" style="left:24px;top:0px;width:2px;height:48px;background:#cdd1d8;"></div>
<div class="t" style="left:52.8px;top:8.9px;font-size:22.6px;line-height:31px;color:#172b4d;letter-spacing:1.48px;">02</div>
<div class="a" style="left:107px;top:0px;width:82px;height:48px;background:#dddee3;"></div>
<div class="a" style="left:106px;top:0px;width:2px;height:48px;background:#cdd1d8;"></div>
<div class="t" style="left:134.8px;top:8.9px;font-size:22.6px;line-height:31px;color:#172b4d;letter-spacing:1.34px;">03</div>
<div class="a" style="left:189px;top:0px;width:82px;height:48px;background:#dddee3;"></div>
<div class="a" style="left:188px;top:0px;width:2px;height:48px;background:#cdd1d8;"></div>
<div class="t" style="left:216.8px;top:8.9px;font-size:22.6px;line-height:31px;color:#172b4d;letter-spacing:1.01px;">04</div>
<div class="a" style="left:270px;top:0px;width:2px;height:48px;background:#cdd1d8;"></div>
<div class="t" style="left:298.8px;top:8.9px;font-size:22.6px;line-height:31px;color:#172b4d;letter-spacing:1.29px;">05</div>
<div class="a" style="left:352px;top:0px;width:2px;height:48px;background:#cdd1d8;"></div>
<div class="t" style="left:380.8px;top:8.9px;font-size:22.6px;line-height:31px;color:#172b4d;letter-spacing:1.34px;">06</div>
<div class="a" style="left:434px;top:0px;width:2px;height:48px;background:#cdd1d8;"></div>
<div class="t" style="left:462.8px;top:8.9px;font-size:22.6px;line-height:31px;color:#172b4d;letter-spacing:1.48px;">07</div>
<div class="a" style="left:516px;top:0px;width:2px;height:48px;background:#cdd1d8;"></div>
<div class="t" style="left:544.8px;top:8.9px;font-size:22.6px;line-height:31px;color:#172b4d;letter-spacing:1.33px;">08</div>
<div class="a" style="left:598px;top:0px;width:2px;height:48px;background:#cdd1d8;"></div>
<div class="t" style="left:626.8px;top:8.9px;font-size:22.6px;line-height:31px;color:#172b4d;letter-spacing:1.42px;">09</div>
<div class="a" style="left:681px;top:0px;width:82px;height:48px;background:#dddee3;"></div>
<div class="a" style="left:680px;top:0px;width:2px;height:48px;background:#cdd1d8;"></div>
<div class="t" style="left:708.0px;top:8.9px;font-size:22.6px;line-height:31px;color:#172b4d;letter-spacing:2.07px;">10</div>
<div class="a" style="left:763px;top:0px;width:82px;height:48px;background:#dddee3;"></div>
<div class="a" style="left:762px;top:0px;width:2px;height:48px;background:#cdd1d8;"></div>
<div class="t" style="left:790.0px;top:8.9px;font-size:22.6px;line-height:31px;color:#172b4d;letter-spacing:2.29px;">11</div>
<div class="a" style="left:844px;top:0px;width:2px;height:48px;background:#cdd1d8;"></div>
<div class="t" style="left:872.0px;top:8.9px;font-size:22.6px;line-height:31px;color:#172b4d;letter-spacing:2.32px;">12</div>
<div class="a" style="left:926px;top:0px;width:2px;height:48px;background:#cdd1d8;"></div>
<div class="t" style="left:954.0px;top:8.9px;font-size:22.6px;line-height:31px;color:#172b4d;letter-spacing:2.18px;">13</div>
<div class="a" style="left:1008px;top:0px;width:2px;height:48px;background:#cdd1d8;"></div>
<div class="t" style="left:1036.0px;top:8.9px;font-size:22.6px;line-height:31px;color:#172b4d;letter-spacing:1.85px;">14</div>
<div class="a" style="left:1090px;top:0px;width:2px;height:48px;background:#cdd1d8;"></div>
<div class="t" style="left:1118.0px;top:8.9px;font-size:22.6px;line-height:31px;color:#172b4d;letter-spacing:2.13px;">15</div>
<div class="a" style="left:1172px;top:0px;width:2px;height:48px;background:#cdd1d8;"></div>
<div class="t" style="left:1200.0px;top:8.9px;font-size:22.6px;line-height:31px;color:#172b4d;letter-spacing:2.18px;">16</div>
<div class="a" style="left:1255px;top:0px;width:82px;height:48px;background:#dddee3;"></div>
<div class="a" style="left:1254px;top:0px;width:2px;height:48px;background:#cdd1d8;"></div>
<div class="t" style="left:1282.0px;top:8.9px;font-size:22.6px;line-height:31px;color:#172b4d;letter-spacing:2.32px;">17</div>
<div class="a" style="left:1337px;top:0px;width:82px;height:48px;background:#dddee3;"></div>
<div class="a" style="left:1336px;top:0px;width:2px;height:48px;background:#cdd1d8;"></div>
<div class="t" style="left:1364.0px;top:8.9px;font-size:22.6px;line-height:31px;color:#172b4d;letter-spacing:2.17px;">18</div>
<div class="a" style="left:1418px;top:0px;width:2px;height:48px;background:#cdd1d8;"></div>
<div class="t" style="left:1446.0px;top:8.9px;font-size:22.6px;line-height:31px;color:#172b4d;letter-spacing:2.25px;">19</div>
<div class="a" style="left:1500px;top:0px;width:2px;height:48px;background:#cdd1d8;"></div>
<div class="t" style="left:1528.6px;top:8.9px;font-size:22.6px;line-height:31px;color:#172b4d;letter-spacing:1.48px;">20</div>
<div class="a" style="left:1582px;top:0px;width:2px;height:48px;background:#cdd1d8;"></div>
<div class="t" style="left:1610.6px;top:8.9px;font-size:22.6px;line-height:31px;color:#172b4d;letter-spacing:1.70px;">21</div>
<div class="a" style="left:1664px;top:0px;width:2px;height:48px;background:#cdd1d8;"></div>
<div class="t" style="left:1692.6px;top:8.9px;font-size:22.6px;line-height:31px;color:#172b4d;letter-spacing:1.74px;">22</div>
</div>
<div class="a clip" style="left:1123px;top:300px;width:1701px;height:1008px;">
<div class="a" style="left:188px;top:0px;width:2px;height:1008px;background:#e4e6ea;"></div>
<div class="a" style="left:762px;top:0px;width:2px;height:1008px;background:#e4e6ea;"></div>
<div class="a" style="left:1336px;top:0px;width:2px;height:1008px;background:#e4e6ea;"></div>
<div class="a" style="left:27px;top:-45px;width:653px;height:48px;background:#dbeaf8;border-radius:7px;"></div>
<svg style="left:0;top:0" width="1701" height="1008" viewBox="1123 300 1701 1008" fill="none">
<g stroke="#758195" stroke-width="3.6" stroke-linejoin="miter">
<path d="M1695.3 300V919H1714"/>
<path d="M1833.6 300V311H1776.8V343.2H1797"/>
<path d="M1641 727.2H1669.2V791H1714"/>
<path d="M2078.5 300V450"/>
</g>
<g fill="#758195">
<path d="M1796 336l10.6 7.2-10.6 7.2z"/>
<path d="M1713.4 783.8l10.6 7.2-10.6 7.2z"/>
<path d="M1713.4 911.8l10.6 7.2-10.6 7.2z"/>
</g>
<g stroke="#8f7ee7" stroke-width="3.6" stroke-linejoin="miter">
<path d="M1795 919H1823V886.4H1777V407.2H1797"/>
</g>
<path d="M1796 400l10.6 7.2-10.6 7.2z" fill="#8f7ee7"/>
</svg>
<div class="a" style="left:682px;top:19px;width:1035px;height:48px;background:rgba(188,99,188,0.18);border-radius:7px;"></div>
<div class="a" style="left:682px;top:83px;width:1035px;height:48px;background:rgba(244,160,138,0.18);border-radius:7px;"></div>
<div class="a" style="left:764px;top:147px;width:244px;height:48px;background:rgba(83,119,223,0.3);border-radius:7px;"></div>
<div class="a" style="left:272px;top:275px;width:905px;height:48px;background:rgba(240,195,70,0.17);border-radius:7px;"></div>
<div class="a" style="left:-23px;top:659px;width:131px;height:48px;background:rgba(83,119,223,0.25);border-radius:7px;"></div>
<div class="a" style="left:272px;top:403px;width:246px;height:48px;background:rgba(83,119,223,0.25);border-radius:7px;"></div>
<div class="a" style="left:600px;top:467px;width:377px;height:48px;background:rgba(90,150,145,0.2);border-radius:7px;"></div>
<div class="a" style="left:625.5px;top:599.5px;width:39px;height:39px;background:rgba(245,90,90,0.2);border-radius:5px;transform:rotate(45deg);"></div>
<svg style="left:0;top:0" width="1701" height="1008" viewBox="1123 300 1701 1008" fill="none">
<g stroke="#e5484d" stroke-width="6.2" stroke-linecap="round" stroke-linejoin="round" style="filter:drop-shadow(0 2px 2px rgba(9,30,66,0.15))">
<path d="M1656.7 653.3C1659.5 621.5 1684.9 546.1 1760.4 563.8"/>
<path d="M1749 549.1L1760.6 563.9L1744.6 575.3"/>
</g>
</svg>
<div class="a" style="left:1640px;top:339px;width:48px;height:48px;background:#f4f5f7;border-radius:24px;"></div>
<svg style="left:1656px;top:353px" width="16" height="20" viewBox="0 0 16 20" fill="none" stroke="#758195" stroke-width="3.4" stroke-linecap="round" stroke-linejoin="round"><path d="M5.4 3.8l6.2 6.2-6.2 6.2"/></svg>
<div class="a" style="left:1640px;top:531px;width:48px;height:48px;background:#f4f5f7;border-radius:24px;"></div>
<svg style="left:1656px;top:545px" width="16" height="20" viewBox="0 0 16 20" fill="none" stroke="#758195" stroke-width="3.4" stroke-linecap="round" stroke-linejoin="round"><path d="M5.4 3.8l6.2 6.2-6.2 6.2"/></svg>
</div>
<div class="a" style="left:2824px;top:300px;width:22px;height:1008px;background:#f7f8f9;border-left:1px solid #eceef1;"></div>
<div class="a" style="left:2830px;top:633px;width:12px;height:262px;background:#b3b9c4;border-radius:6px;"></div>
<div class="a" style="left:1117px;top:200px;width:2px;height:1194px;background:rgba(9,30,66,0.055);"></div>
<div class="a" style="left:1119px;top:200px;width:4px;height:1194px;background:rgba(9,30,66,0.13);"></div>
<aside>
<div class="a" style="left:1839px;top:450px;width:704px;height:425px;background:#fff;border-radius:8px;box-shadow:0 16px 24px rgba(9,30,66,0.15),0 0 2px rgba(9,30,66,0.31);"></div>
<div class="a" style="left:1897px;top:599px;width:4px;height:128px;background:#7a869a;"></div>
<div class="a" style="left:1879px;top:490px;width:624px;height:109px;background:#fff;box-shadow:0 1px 14px rgba(9,30,66,0.14);"></div>
<div class="a" style="left:1901px;top:512px;width:28px;height:28px;background:#66abe3;border-radius:4px;"></div><svg style="left:1901px;top:512px" width="28" height="28" viewBox="0 0 28 28" fill="none" stroke="#fff" stroke-width="3.4" stroke-linecap="round" stroke-linejoin="round"><path d="M7.7 14.9l4.4 4.6 8.1-10.3"/></svg>
<div class="t" style="left:1958.3px;top:510.3px;font-size:28.6px;line-height:40px;color:#2a5fda;letter-spacing:-0.39px;-webkit-text-stroke:0.6px #2a5fda;">DLA-11</div>
<div class="t" style="left:2084.8px;top:510.5px;font-size:29px;line-height:40px;color:#172b4d;letter-spacing:0.05px;">Implement secure payment ...</div>
<div class="t" style="left:1951.0px;top:552.8px;font-size:21px;line-height:29px;color:#626f86;letter-spacing:0.68px;">Start date 02/09/2024</div>
<div class="a" style="left:1879px;top:727px;width:624px;height:108px;background:#fff;box-shadow:0 1px 14px rgba(9,30,66,0.14);"></div>
<div class="a" style="left:1901px;top:749px;width:28px;height:28px;background:#66abe3;border-radius:4px;"></div><svg style="left:1901px;top:749px" width="28" height="28" viewBox="0 0 28 28" fill="none" stroke="#fff" stroke-width="3.4" stroke-linecap="round" stroke-linejoin="round"><path d="M7.7 14.9l4.4 4.6 8.1-10.3"/></svg>
<div class="t" style="left:1958.3px;top:747.3px;font-size:28.6px;line-height:40px;color:#2a5fda;letter-spacing:1.33px;-webkit-text-stroke:0.6px #2a5fda;">DLA-6</div>
<div class="t" style="left:2076.3px;top:747.5px;font-size:29px;line-height:40px;color:#172b4d;letter-spacing:0.12px;">Implement an internationaliz...</div>
<div class="t" style="left:1950.3px;top:789.8px;font-size:21px;line-height:29px;color:#626f86;letter-spacing:0.59px;">Due date 03/22/2024</div>
<div class="a" style="left:1879px;top:643px;width:40px;height:40px;background:#44546f;border-radius:20px;"></div>
<svg style="left:1884px;top:648px" width="30" height="30" viewBox="0 0 30 30" fill="none" stroke="#fff" stroke-width="2.5" stroke-linecap="round"><g transform="translate(15 15) scale(1.22) translate(-12 -12)"><path d="M10.2 13.8a4.2 4.2 0 0 0 6 0l3.4-3.4a4.2 4.2 0 0 0-6-6l-1.4 1.4"/><path d="M13.8 10.2a4.2 4.2 0 0 0-6 0l-3.4 3.4a4.2 4.2 0 0 0 6 6l1.4-1.4"/></g></svg>
<div class="t" style="left:1934.1px;top:643.0px;font-size:29px;line-height:40px;color:#172b4d;letter-spacing:0.35px;">Finish-to-Start link (...</div>
<div class="t" style="left:2239.7px;top:643.0px;font-size:29px;line-height:40px;color:#172b4d;letter-spacing:0.06px;">(Finish to Start)</div>
<div class="a" style="left:2440px;top:630px;width:69px;height:69px;border-radius:4px;border:6px solid #e5484d;box-shadow:0 2px 6px rgba(9,30,66,0.12);"></div>
<svg style="left:2440px;top:630px" width="69" height="69" viewBox="0 0 69 69" ><g transform="translate(31.4 32.4) rotate(-45)" fill="none" stroke="#172b4d" stroke-width="4.3">
<path d="M1.6 -4.4H10.2a4.4 4.4 0 0 1 0 8.8H1.6"/><path d="M-1.6 -4.4H-10.2a4.4 4.4 0 0 0 0 8.8H-1.6"/></g>
<path d="M23.2 18.4l1 2.4M17.2 24.4l2.4 1M44 39.6l2.4 1M38.8 45.4l1 2.4" stroke="#172b4d" stroke-width="3.8" stroke-linecap="round"/></svg>
</aside>
<footer>
<div class="a" style="left:80px;top:1362.2px;width:24px;height:3.6px;background:#172b4d;border-radius:2px;"></div>
<div class="a" style="left:90.2px;top:1352px;width:3.6px;height:24px;background:#172b4d;border-radius:2px;"></div>
<div class="t" style="left:123.5px;top:1344.0px;font-size:29px;line-height:40px;color:#172b4d;letter-spacing:-0.06px;">Create</div>
<svg style="left:2144px;top:1353px" width="16" height="20" viewBox="0 0 16 20" fill="none" stroke="#172b4d" stroke-width="4" stroke-linecap="round" stroke-linejoin="round"><path d="M4.8 3.6l6.4 6.4-6.4 6.4"/></svg>
<div class="a" style="left:2191px;top:1332px;width:2px;height:62px;background:#dcdfe4;"></div>
<div class="t" style="left:2226.2px;top:1344.0px;font-size:28.6px;line-height:40px;color:#172b4d;letter-spacing:-0.85px;-webkit-text-stroke:0.8px #172b4d;">Today</div>
<div class="a" style="left:2336px;top:1332px;width:2px;height:62px;background:#dcdfe4;"></div>
<div class="a" style="left:2346px;top:1332px;width:97px;height:62px;background:#ebf1fd;border-radius:7px;"></div>
<div class="t" style="left:2361.1px;top:1344.0px;font-size:28.6px;line-height:40px;color:#1f4fc7;font-weight:700;letter-spacing:-0.60px;">Days</div>
<div class="t" style="left:2467.9px;top:1344.0px;font-size:29px;line-height:40px;color:#172b4d;letter-spacing:-1.86px;">Weeks</div>
<div class="t" style="left:2587.6px;top:1344.0px;font-size:29px;line-height:40px;color:#172b4d;letter-spacing:-0.13px;">Months</div>
<div class="t" style="left:2721.1px;top:1344.0px;font-size:29px;line-height:40px;color:#172b4d;letter-spacing:-0.48px;">Quarters</div>
</footer>
</main>
</body></html>
